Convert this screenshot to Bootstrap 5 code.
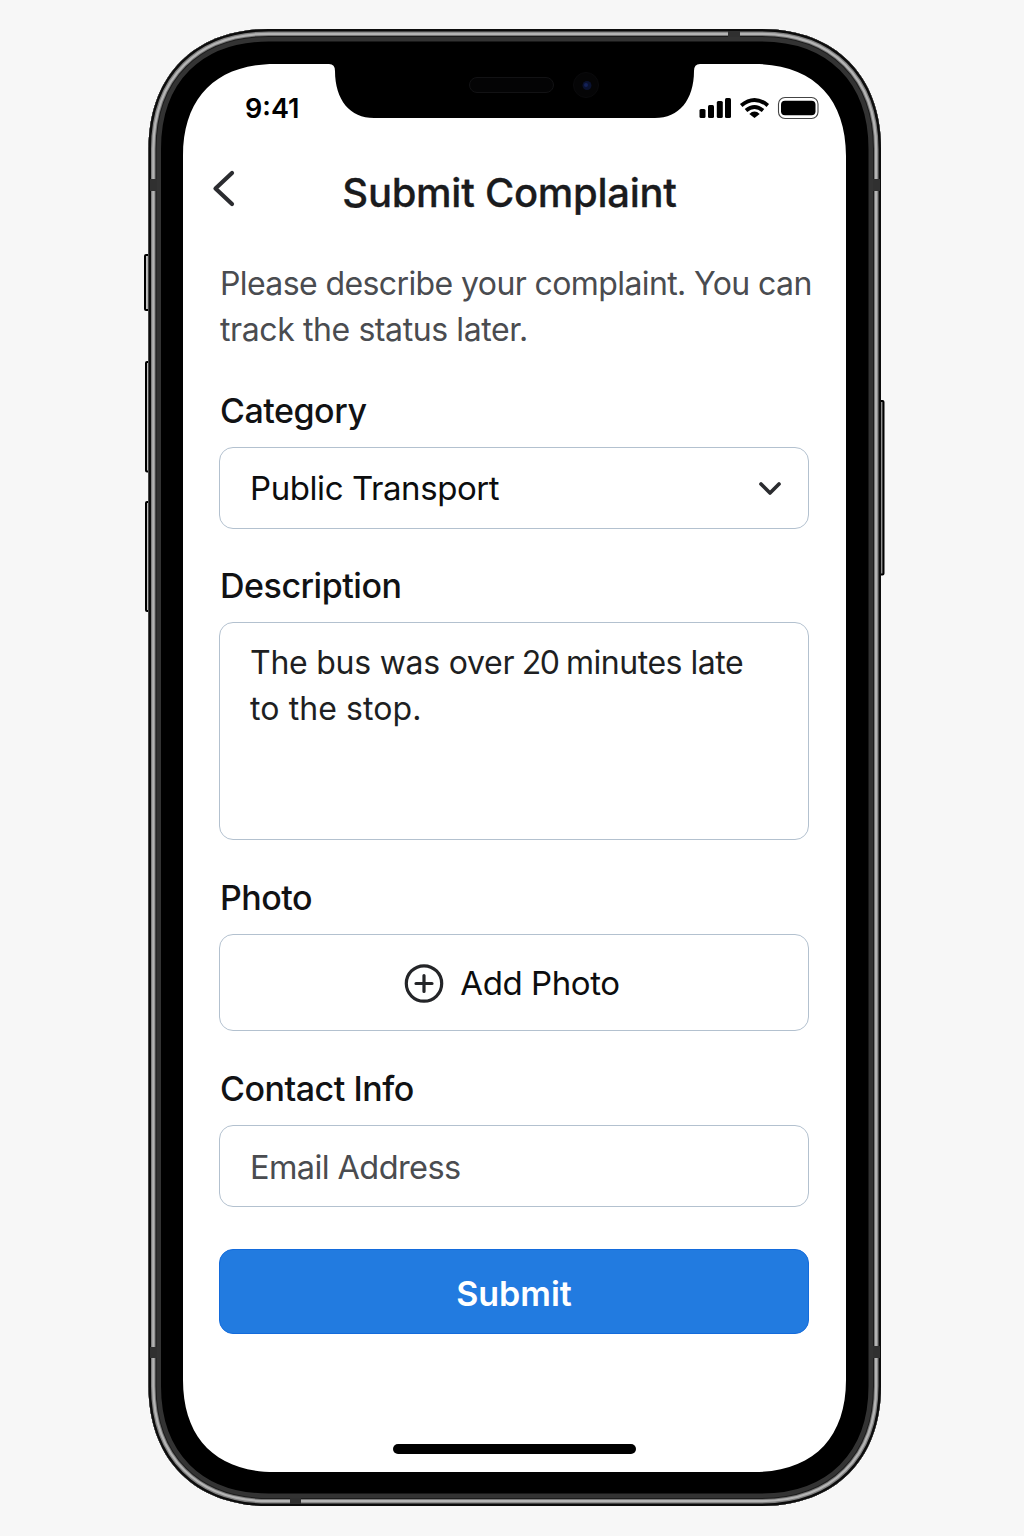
<!DOCTYPE html>
<html lang="en">
<head>
<meta charset="utf-8">
<meta name="viewport" content="width=device-width, initial-scale=1">
<title>Submit Complaint</title>
<link href="https://cdn.jsdelivr.net/npm/bootstrap@5.3.0/dist/css/bootstrap.min.css" rel="stylesheet">
<style>
body{background:#f7f7f7;font-family:Inter,"Liberation Sans",sans-serif;color:#111214;width:1024px;height:1536px;overflow:hidden}
.device-art{position:absolute;left:0;top:0;z-index:0}
.phone-screen{position:relative;z-index:1;width:663px;height:1408px;margin:64px 0 0 183px}
.status-row{height:88px;padding:0 27px 0 62px}
.clock{font-size:27px;font-weight:600;color:#000;line-height:40px;padding-top:1px}
.title-row{height:80px;padding:0 37px 0 27px}
.page-title{font-size:40px;font-weight:500;line-height:80px;color:#1a1b1d;letter-spacing:-.28px;padding-top:2px;-webkit-text-stroke:.3px #1a1b1d}
.back-btn{line-height:0;margin-top:-6px}
.form-area{padding:0 37px 0 36px}
.intro{font-size:32px;font-weight:400;line-height:46px;color:#4a4c50;margin:29px -20px 0 1px;white-space:nowrap;letter-spacing:-.6px}
.intro-end{letter-spacing:-.4px}
.form-label{font-size:34px;font-weight:500;line-height:40px;letter-spacing:-.48px;margin:38px 0 16px 1px;display:block}
.first-label{margin-top:37.500px;margin-bottom:16.500px}
.desc-label{margin-top:37px}
.form-control,.photo-btn{border:1.5px solid #b3c1cf;border-radius:14px;background:#fff;font-size:33px;color:#0c0d0e;padding:2px 26px 0 30px;letter-spacing:-.42px;font-weight:400}
.h-field{height:82px}
.h-photo{height:97px;padding:2px 34px 0 30px}
.desc-box{height:218px;padding:17px 30px;line-height:46px;font-size:32px;letter-spacing:-.25px;color:#1e1f22}
.qty{letter-spacing:-1.5px}
.desc-mid{letter-spacing:-.48px}
.desc-end{letter-spacing:.1px}
.mail-box{font-size:32.500px;letter-spacing:-.6px;padding-top:2px}
.form-control::placeholder{color:#4a4c50;opacity:1}
.submit-btn{height:85px;border-radius:14px;background:#227be0;border:1.5px solid #136bdc;font-size:34px;font-weight:600;color:#fff;margin-top:42px;padding-top:9px}
.home-bar{width:243px;height:10px;border-radius:5px;background:#000;margin:110px auto 0}
</style>
<script src="https://cdn.jsdelivr.net/npm/bootstrap@5.3.0/dist/js/bootstrap.bundle.min.js"></script>
</head>
<body>
<svg class="device-art" width="1024" height="1536" viewBox="0 0 1024 1536" aria-hidden="true">
  <defs>
    <path id="shell" d="M148.500 149C148.500 75 195 29 268.500 29H761C834.500 29 881 75 881 149V1386C881 1460 834.500 1506 761 1506H268.500C195 1506 148.500 1460 148.500 1386Z"/>
    <clipPath id="shellClip"><use href="#shell"/></clipPath>
    <linearGradient id="key" x1="0" x2="1" y1="0" y2="0"><stop offset="0" stop-color="#ddd"/><stop offset="1" stop-color="#666"/></linearGradient>
  </defs>
  <g fill="url(#key)" stroke="#000" stroke-width="2">
    <rect x="145" y="255" width="7" height="55" rx="1"/>
    <rect x="146" y="362" width="6" height="109.500" rx="1"/>
    <rect x="146" y="502" width="6" height="109" rx="1"/>
    <rect x="878" y="401" width="5.500" height="173.500" rx="1"/>
  </g>
  <use href="#shell" fill="#000"/>
  <g clip-path="url(#shellClip)" fill="none">
    <use href="#shell" stroke="#333" stroke-width="25"/>
    <use href="#shell" stroke="#1c1c1c" stroke-width="16"/>
    <use href="#shell" stroke="#777" stroke-width="14"/>
    <use href="#shell" stroke="#b4b4b4" stroke-width="12"/>
    <use href="#shell" stroke="#808080" stroke-width="7.500"/>
    <use href="#shell" stroke="#0c0c0c" stroke-width="5"/>
  </g>
  <g fill="#303030">
    <path d="M150 179h7v12h-7zM873 179h7v12h-7zM150 1347h7v11h-7zM873 1346h7v12h-7zM728 31h12v6h-12zM290 1498h11v6h-11z"/>
  </g>
  <path fill="#fff" d="M183 156C183 97 217 64 275 64H329Q335 64 335 71C335 100 350 118 374 118H655C679 118 694 100 694 71Q694 64 700 64H754C812 64 846 97 846 156V1380C846 1439 812 1472 754 1472H275C217 1472 183 1439 183 1380Z"/>
  <rect x="469.500" y="77.500" width="84" height="15" rx="7.500" fill="#040405" stroke="#121214"/>
  <circle cx="586" cy="85" r="12.500" fill="#050506" stroke="#0a0a0c"/>
  <circle cx="587" cy="85.500" r="4.500" fill="#0a1230"/>
  <circle cx="586" cy="85" r="2" fill="#142258"/>
</svg>

<main class="phone-screen d-flex flex-column">
  <div class="status-row d-flex align-items-center justify-content-between">
    <span class="clock">9:41</span>
    <svg width="121" height="24" viewBox="698 96 121 24" aria-label="Signal, Wi-Fi and battery">
      <rect x="699.500" y="109" width="6" height="9" rx="1.500"/><rect x="708" y="105" width="6" height="13" rx="1.500"/><rect x="716.800" y="101" width="6" height="17" rx="1.500"/><rect x="725" y="98" width="6" height="20" rx="1.500"/>
      <g fill="none" stroke="#000" stroke-width="3.900"><path d="M741.200 105.400Q754.500 94.400 767.800 105.400"/><path d="M746 110.600Q754.500 103.400 763 110.600"/></g>
      <path d="M749.300 114Q754.500 109.200 759.700 114L754.500 118Z"/>
      <rect x="778.500" y="97.500" width="39.500" height="21" rx="6.500" fill="#fff" stroke="#444" stroke-width="1.100"/>
      <rect x="781" y="100.800" width="34.500" height="14.400" rx="4"/>
    </svg>
  </div>
  <header class="title-row position-relative d-flex align-items-center justify-content-center">
    <button class="back-btn btn p-0 border-0 position-absolute start-0 ms-4" type="button" aria-label="Back">
      <svg width="36" height="44" viewBox="207 167 36 44"><path d="M232 173 215.500 188.500 232 204" fill="none" stroke="#2b2c30" stroke-width="4.200" stroke-linecap="round" stroke-linejoin="round"/></svg>
    </button>
    <h1 class="page-title m-0">Submit Complaint</h1>
  </header>
  <form class="form-area">
    <p class="intro">Please describe your complaint. You can<br><span class="intro-end">track the status later.</span></p>
    <label class="form-label first-label">Category</label>
    <button type="button" class="form-control h-field d-flex align-items-center justify-content-between"><span>Public Transport</span>
      <svg width="24" height="16" viewBox="0 0 24 16"><path d="M3 3 12 12 21 3" fill="none" stroke="#2b2c30" stroke-width="3.700" stroke-linecap="round" stroke-linejoin="round"/></svg>
    </button>
    <label class="form-label desc-label">Description</label>
    <div class="form-control desc-box" role="textbox" aria-label="Description">The bus was over<span class="qty"> 20 </span><span class="desc-mid">minutes late</span><br><span class="desc-end">to the stop.</span></div>
    <label class="form-label">Photo</label>
    <button type="button" class="photo-btn btn w-100 h-photo d-flex align-items-center justify-content-center gap-3">
      <svg width="40" height="40" viewBox="0 0 40 40" fill="none" stroke="#242528" stroke-width="3.200" stroke-linecap="round"><circle cx="20" cy="19.500" r="17.700"/><path d="M12 19.500h16M20 11.500v16"/></svg>
      <span>Add Photo</span>
    </button>
    <label class="form-label" for="mail">Contact Info</label>
    <input id="mail" type="email" class="form-control h-field mail-box" placeholder="Email Address">
    <button type="button" class="submit-btn btn w-100">Submit</button>
  </form>
  <div class="home-bar"></div>
</main>
</body>
</html>
